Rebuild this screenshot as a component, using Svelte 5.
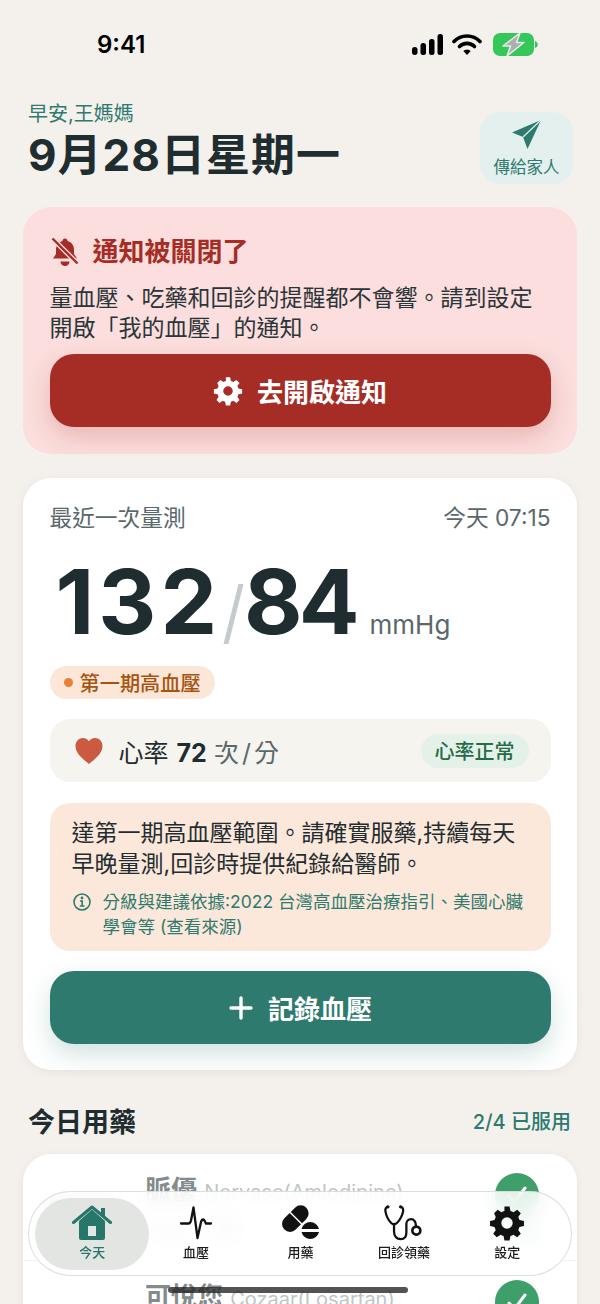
<script>
  const tabs = [
    { id: 'home', label: '今天', active: true },
    { id: 'pulse', label: '血壓' },
    { id: 'pills', label: '用藥' },
    { id: 'scope', label: '回診領藥' },
    { id: 'gear', label: '設定' }
  ];

  const meds = [
    { time: '08:00', name: '脈優', en: 'Norvasc(Amlodipine)', dose: '5mg · 1 顆', state: '已服用' },
    { time: '08:00', name: '可悅您', en: 'Cozaar(Losartan)', dose: '50mg · 1 顆', state: '已服用' }
  ];

  const gearPath =
    'M10.300 1h3.400l.6 3a8 8 0 0 1 2 .8l2.500-1.700 2.400 2.400-1.700 2.500a8 8 0 0 1 .8 2l3 .6v3.400l-3 .6a8 8 0 0 1-.8 2l1.700 2.500-2.400 2.400-2.500-1.700a8 8 0 0 1-2 .8l-.6 3h-3.400l-.6-3a8 8 0 0 1-2-.8l-2.500 1.700-2.400-2.400 1.700-2.500a8 8 0 0 1-.8-2l-3-.6v-3.400l3-.6a8 8 0 0 1 .8-2L3.400 5.500l2.400-2.400 2.500 1.700a8 8 0 0 1 2-.8zM12 8.200a3.800 3.800 0 1 0 0 7.600 3.800 3.800 0 0 0 0-7.600z';
</script>

<div class="screen" lang="zh-Hant">
  <div class="status">
    <span class="clock">9:41</span>
    <div class="status-icons">
      <svg width="31" height="21" viewBox="0 0 31 21">
        <rect x="0" y="13" width="5.500" height="8" rx="2.700" fill="#000" />
        <rect x="8.500" y="9" width="5.500" height="12" rx="2.500" fill="#000" />
        <rect x="17" y="5" width="5.500" height="16" rx="2.500" fill="#000" />
        <rect x="25.500" y="0" width="5.500" height="21" rx="2.500" fill="#000" />
      </svg>
      <svg width="30" height="22" viewBox="0 0 30 22" fill="none">
        <path d="M2 8.500a18 18 0 0 1 26 0" stroke="#000" stroke-width="3.600" stroke-linecap="round" />
        <path d="M7.500 13.500a10.500 10.500 0 0 1 15 0" stroke="#000" stroke-width="3.600" stroke-linecap="round" />
        <path d="M11.300 18a5.200 5.200 0 0 1 7.400 0L15 22z" fill="#000" />
      </svg>
      <svg class="battery" width="45" height="23" viewBox="0 0 45 23">
        <rect x="0" y="0" width="41" height="23" rx="7" fill="#35c759" />
        <path d="M42 8c1.800.5 2.800 2 2.800 3.500S43.800 14.500 42 15z" fill="#35c759" />
        <path d="M27 0 10 13h7.500L14 23l17-13.500h-7.500L27 0z" fill="#aeaeb0" stroke="#e9efe8" stroke-width="1.500" stroke-linejoin="round" />
      </svg>
    </div>
  </div>

  <header class="head">
    <div>
      <div class="greet">早安,王媽媽</div>
      <h1 class="date">9月28日星期一</h1>
    </div>
    <button class="send">
      <svg width="32" height="32" viewBox="0 0 32 32">
        <path d="M30 1 1 13.500l11 4.500 4.500 12z" fill="#2e7a6e" />
        <path d="M30 1 12 18" stroke="#e3f0ed" stroke-width="1.200" />
      </svg>
      <span>傳給家人</span>
    </button>
  </header>

  <section class="notice">
    <div class="notice-title">
      <svg width="30" height="30" viewBox="0 0 30 30">
        <path d="M15 1.500c1.500 0 2.500 1 2.500 2.400 4 1 6.500 4.500 6.500 8.600v4.500l3 4.500H3l3-4.500v-4.500c0-4 2.500-7.600 6.500-8.600 0-1.400 1-2.400 2.500-2.400z" fill="#a52d26" />
        <path d="M10.500 24.500h9a4.500 4.500 0 0 1-9 0z" fill="#a52d26" />
        <path d="M2 1l26 26" stroke="#fbdedd" stroke-width="5" />
        <path d="M2.500 1.500l25 25" stroke="#a52d26" stroke-width="2.400" />
      </svg>
      <span>通知被關閉了</span>
    </div>
    <p class="notice-text">量血壓、吃藥和回診的提醒都不會響。請到設定開啟「我的血壓」的通知。</p>
    <button class="btn btn-red">
      <svg width="30" height="30" viewBox="0 0 24 24"><path d={gearPath} fill="#fff" fill-rule="evenodd" /></svg>
      <span>去開啟通知</span>
    </button>
  </section>

  <section class="card reading">
    <div class="reading-top">
      <span>最近一次量測</span>
      <span class="when">今天 07:15</span>
    </div>
    <div class="bp">
      <span class="bp-num sys">132</span>
      <span class="bp-slash"></span>
      <span class="bp-num dia">84</span>
      <span class="bp-unit">mmHg</span>
    </div>
    <div class="stage"><i></i>第一期高血壓</div>

    <div class="heart-row">
      <svg width="30" height="28" viewBox="0 0 30 28">
        <path d="M15 27C9 22 1.500 16.500 1.500 9 1.500 4.500 5 1 9 1c2.700 0 4.800 1.300 6 3.500C16.200 2.300 18.300 1 21 1c4 0 7.500 3.500 7.500 8 0 7.500-7.500 13-13.500 18z" fill="#cb5a40" />
      </svg>
      <span class="hr-text">心率 <b>72</b> <em>次<i>/</i>分</em></span>
      <span class="hr-tag">心率正常</span>
    </div>

    <div class="advice">
      <p>達第一期高血壓範圍。請確實服藥,持續每天早晚量測,回診時提供紀錄給醫師。</p>
      <div class="source">
        <svg width="20" height="20" viewBox="0 0 20 20" fill="none" stroke="#2e7a6e" stroke-width="1.600">
          <circle cx="10" cy="10" r="8" />
          <path d="M8 9h2.200v5M7.800 14h4.600" />
          <circle cx="10" cy="6" r=".6" fill="#2e7a6e" />
        </svg>
        <span>分級與建議依據:2022 台灣高血壓治療指引、美國心臟學會等 (查看來源)</span>
      </div>
    </div>

    <button class="btn btn-green">
      <svg width="26" height="26" viewBox="0 0 26 26"><path d="M13 3v20M3 13h20" stroke="#fff" stroke-width="3.400" stroke-linecap="round" /></svg>
      <span>記錄血壓</span>
    </button>
  </section>

  <div class="meds-head">
    <h2>今日用藥</h2>
    <span>2/4 已服用</span>
  </div>

  <section class="card meds">
    {#each meds as med}
      <div class="med">
        <span class="med-time">{med.time}</span>
        <div class="med-info">
          <div class="med-name">{med.name} <small>{med.en}</small></div>
          <div class="med-dose">{med.dose}</div>
        </div>
        <div class="med-state">
          <span class="tick">
            <svg width="24" height="24" viewBox="0 0 24 24" fill="none"><path d="M4 13l5.500 6L20 5" stroke="#fff" stroke-width="3" stroke-linecap="round" stroke-linejoin="round" /></svg>
          </span>
          <span class="state-label">{med.state}</span>
        </div>
      </div>
    {/each}
  </section>

  <nav class="tabbar">
    {#each tabs as tab}
      <div class="tab tab-{tab.id}" class:active={tab.active}>
        {#if tab.id === 'home'}
          <svg width="40" height="36" viewBox="0 0 40 36">
            <path d="M7 16 20 4.500 33 16v17a2 2 0 0 1-2 2H9a2 2 0 0 1-2-2zM16 21v10h8V21z" fill="#27766a" fill-rule="evenodd" />
            <path d="M1.500 17.500 20 2l18.500 15.500" fill="none" stroke="#27766a" stroke-width="3" stroke-linecap="round" stroke-linejoin="round" />
            <rect x="29" y="3" width="4" height="9" fill="#27766a" />
          </svg>
        {:else if tab.id === 'pulse'}
          <svg width="36" height="38" viewBox="0 0 36 38" fill="none">
            <path d="M3 19.500h7.500c1.500 0 2-1 2.500-3L15.500 3.500 19.500 34l3.500-16c.5-2 1-2.500 2.500-2.500 1 0 1.500 2.500 2.500 4h5" stroke="#111" stroke-width="2.300" stroke-linecap="round" stroke-linejoin="round" />
          </svg>
        {:else if tab.id === 'pills'}
          <svg width="40" height="38" viewBox="0 0 40 38">
            <g transform="rotate(-45 14 15)">
              <path d="M-1 15a8 8 0 0 1 8-8h7.500v16H7a8 8 0 0 1-8-8z" fill="#111" />
              <path d="M16 7h6a8 8 0 0 1 0 16h-6z" fill="#111" />
            </g>
            <path d="M20.500 25a9 9 0 0 1 17.500 0z M20.500 28h17.500a9 9 0 0 1-17.500 0z" fill="#111" />
          </svg>
        {:else if tab.id === 'scope'}
          <svg width="44" height="40" viewBox="0 0 44 40" fill="none" stroke="#111" stroke-width="2.400" stroke-linecap="round">
            <path d="M5 3C2.500 3.500 2 5 2.500 8c1 5 4 10 6 12 2 2 4 2 6 0 2-2 5.500-7 6.500-12 .5-3 0-4.500-2.500-5" />
            <path d="M11.500 21v8c0 5 3 8 7 8s6-3 6-7v-9c0-3 2-5 5-5s5 3 5 6v2" />
            <circle cx="35" cy="28" r="4.200" stroke-width="2.800" />
            <circle cx="5" cy="3" r="1.800" fill="#111" stroke="none" />
            <circle cx="18.500" cy="3" r="1.800" fill="#111" stroke="none" />
          </svg>
        {:else}
          <svg width="36" height="38" viewBox="0 0 24 24"><path d={gearPath} fill="#111" fill-rule="evenodd" /></svg>
        {/if}
        <span>{tab.label}</span>
      </div>
    {/each}
  </nav>
  <div class="home-bar"></div>
</div>

<style>
  :global(body) {
    margin: 0;
    background: #f4f1ed;
  }

  .screen {
    position: relative;
    width: 600px;
    height: 1304px;
    overflow: hidden;
    background: #f4f1ed;
    color: #1f2d31;
    font-family: Inter, "Noto Sans CJK TC", sans-serif;
  }

  .status {
    display: flex;
    justify-content: space-between;
    align-items: center;
    height: 44px;
    padding: 22px 62px 0 97px;
  }

  .clock {
    font-size: 24px;
    font-weight: 600;
    color: #000;
  }

  .status-icons {
    display: flex;
    align-items: center;
    gap: 9px;
  }

  .battery {
    margin-left: 2px;
  }

  .head {
    display: flex;
    justify-content: space-between;
    align-items: flex-start;
    padding: 34px 27px 0 28px;
    height: 141px;
    box-sizing: border-box;
  }

  .greet {
    font-size: 20px;
    line-height: 28px;
    font-weight: 400;
    color: #2e7a6e;
  }

  .date {
    margin: 0;
    font-size: 44px;
    line-height: 54px;
    font-weight: 700;
    letter-spacing: 1px;
  }

  .send {
    display: flex;
    flex-direction: column;
    align-items: center;
    justify-content: center;
    gap: 3px;
    width: 93px;
    height: 72px;
    margin-top: 12px;
    padding: 0;
    border: 0;
    border-radius: 20px;
    background: #e3f0ed;
    color: #2e7a6e;
    font: 400 16.500px Inter, "Noto Sans CJK TC", sans-serif;
  }

  .notice {
    margin: 0 23px;
    padding: 27px 26.500px;
    height: 247px;
    box-sizing: border-box;
    border-radius: 28px;
    background: #fbdedd;
  }

  .notice-title {
    display: flex;
    align-items: center;
    gap: 13px;
    font-size: 26px;
    line-height: 36px;
    font-weight: 700;
    color: #a52d26;
  }

  .notice-text {
    margin: 13px 0 0;
    font-size: 23px;
    line-height: 30px;
    color: #2a3538;
  }

  .btn {
    display: flex;
    align-items: center;
    justify-content: center;
    gap: 14px;
    width: 100%;
    height: 73px;
    border: 0;
    border-radius: 24px;
    color: #fff;
    font: 700 26px Inter, "Noto Sans CJK TC", sans-serif;
  }

  .btn-red {
    margin-top: 11px;
    background: #a52d26;
    box-shadow: 0 10px 24px rgba(165, 45, 38, 0.22);
  }

  .btn-green {
    margin-top: 20px;
    background: #2e7a6e;
    box-shadow: 0 10px 24px rgba(46, 122, 110, 0.22);
  }

  .card {
    margin: 0 23px;
    border-radius: 28px;
    background: #fff;
    box-shadow: 0 2px 10px rgba(40, 40, 30, 0.06);
  }

  .reading {
    margin-top: 24px;
    height: 592px;
    padding: 24px 26.500px;
    box-sizing: border-box;
  }

  .reading-top {
    display: flex;
    justify-content: space-between;
    font-size: 22.700px;
    line-height: 32px;
    color: #5a686b;
  }

  .bp {
    display: flex;
    align-items: baseline;
    height: 108px;
    margin-top: 14px;
    padding-left: 6px;
  }

  .bp-num {
    font-size: 90px;
    line-height: 108px;
    font-weight: 700;
  }

  .bp-num.sys {
    letter-spacing: 4px;
  }

  .bp-num.dia {
    letter-spacing: -4px;
  }

  .bp-slash {
    width: 5px;
    height: 60px;
    margin: 0 8px 0 10px;
    background: #c4cbcc;
    transform: translateY(10px) skewX(-14deg);
  }

  .bp-unit {
    margin-left: 14px;
    font-size: 26px;
    color: #5a686b;
  }

  .stage {
    display: inline-flex;
    align-items: center;
    gap: 7px;
    height: 33px;
    margin-top: 10px;
    padding: 0 14px;
    border-radius: 17px;
    background: #fce6d8;
    color: #a6530f;
    font-size: 20.200px;
    font-weight: 500;
  }

  .stage i {
    width: 9px;
    height: 9px;
    border-radius: 50%;
    background: #e88137;
  }

  .heart-row {
    display: flex;
    align-items: center;
    height: 63px;
    margin-top: 20px;
    padding: 0 22px 0 24px;
    border-radius: 20px;
    background: #f6f4ef;
  }

  .hr-text {
    flex: 1;
    margin-left: 15px;
    font-size: 25px;
    white-space: pre;
  }

  .hr-text b {
    margin-left: 1px;
    font-weight: 700;
  }

  .hr-text em {
    font-style: normal;
    color: #5a686b;
  }

  .hr-text em i {
    margin: 0 3px;
    font-style: normal;
  }

  .hr-tag {
    display: flex;
    align-items: center;
    height: 34px;
    padding: 0 14px;
    border-radius: 17px;
    background: #e4f1e8;
    color: #256b47;
    font-size: 20px;
    font-weight: 500;
  }

  .advice {
    margin-top: 21px;
    padding: 15px 22px 14px;
    height: 148px;
    box-sizing: border-box;
    border-radius: 20px;
    background: #fce8da;
  }

  .advice p {
    margin: 0;
    font-size: 23px;
    line-height: 31px;
    color: #1f2d31;
  }

  .source {
    display: flex;
    gap: 11px;
    margin-top: 9px;
    font-size: 17.500px;
    line-height: 25px;
    color: #2e7a6e;
  }

  .source svg {
    flex: none;
    margin-top: 3px;
  }

  .meds-head {
    display: flex;
    justify-content: space-between;
    align-items: center;
    height: 84px;
    padding: 16px 29px 0 28px;
    box-sizing: border-box;
  }

  .meds-head h2 {
    margin: 0;
    font-size: 27px;
    font-weight: 700;
  }

  .meds-head span {
    font-size: 20px;
    font-weight: 500;
    color: #2e7a6e;
  }

  .med {
    display: flex;
    align-items: center;
    height: 107px;
    padding: 0 37px 0 24px;
    box-sizing: border-box;
    border-bottom: 1px solid #f1f1ef;
  }

  /* taken doses are dimmed */
  .med-time {
    width: 98px;
    font-size: 22px;
    font-weight: 700;
    opacity: 0.55;
  }

  .med-info {
    flex: 1;
    opacity: 0.55;
  }

  .med-name {
    font-size: 26px;
    line-height: 36px;
    font-weight: 700;
    color: #1f2d31;
  }

  .med-name small {
    margin-left: 1px;
    font-size: 20px;
    font-weight: 400;
    color: #8b9597;
  }

  .med-dose {
    margin-top: 4px;
    font-size: 20px;
    color: #5a686b;
  }

  .med-state {
    display: flex;
    flex-direction: column;
    align-items: center;
    gap: 4px;
  }

  .tick {
    display: flex;
    align-items: center;
    justify-content: center;
    width: 44px;
    height: 44px;
    border-radius: 50%;
    background: #3e9f6b;
  }

  .state-label {
    font-size: 15px;
    color: #3e9f6b;
  }

  .tabbar {
    position: absolute;
    left: 28px;
    top: 1191px;
    display: flex;
    align-items: center;
    width: 544px;
    height: 85px;
    padding: 0 6px;
    box-sizing: border-box;
    border-radius: 43px;
    border: 1px solid rgba(215, 218, 214, 0.9);
    background: rgba(255, 255, 255, 0.84);
    -webkit-backdrop-filter: blur(10px);
    backdrop-filter: blur(10px);
  }

  .tab {
    display: flex;
    flex-direction: column;
    align-items: center;
    justify-content: center;
    height: 72px;
    padding-bottom: 2px;
    box-sizing: border-box;
    color: #1c1c1c;
    font-size: 13px;
    font-weight: 500;
  }

  .tab svg {
    height: 38px;
  }

  .tab-home { width: 115px; }
  .tab-pulse { width: 94px; }
  .tab-pills { width: 116px; }
  .tab-scope { width: 92px; }
  .tab-gear { width: 116px; }

  .tab.active {
    border-radius: 36px;
    background: rgba(222, 224, 222, 0.85);
    color: #27766a;
  }

  .home-bar {
    position: absolute;
    left: 168px;
    top: 1287px;
    width: 240px;
    height: 6px;
    border-radius: 3px;
    background: rgba(40, 40, 40, 0.8);
  }
</style>
